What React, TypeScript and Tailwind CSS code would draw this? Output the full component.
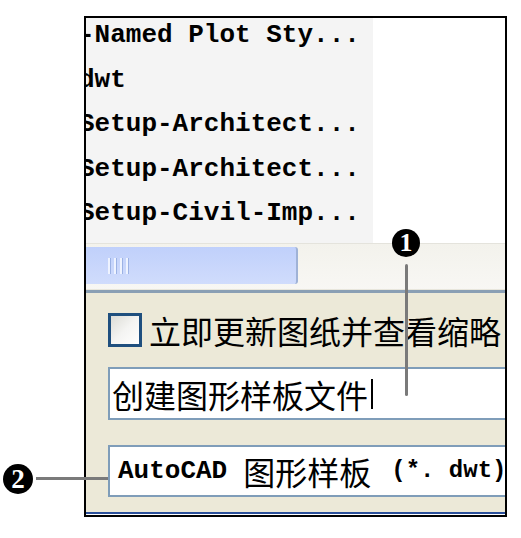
import React from "react";

const mono = { fontFamily: '"Liberation Mono", "DejaVu Sans Mono", monospace' };
const cjk = { fontFamily: '"Noto Sans CJK SC", sans-serif' };

export default function App() {
  const rows = [
    "-Named Plot Sty...",
    "dwt",
    "Setup-Architect...",
    "Setup-Architect...",
    "Setup-Civil-Imp...",
  ];
  return (
    <div className="relative w-[521px] h-[538px] bg-white overflow-hidden">
      <div className="ml-[84px] mt-[16px] w-[423px] border-t-2 border-l-2 border-r-2 border-black flex flex-col">
        {/* list */}
        <div className="h-[225px] overflow-hidden flex bg-white">
          <div className="w-[287px] bg-[#f4f4f4] overflow-hidden">
            <div className="-mt-[5px] -ml-[7px] flex flex-col">
              {rows.map((r, i) => (
                <div
                  key={i}
                  className="h-[44.5px] flex items-center text-[26px] font-bold text-black whitespace-pre leading-none"
                  style={mono}
                >
                  {r}
                </div>
              ))}
            </div>
          </div>
          <div className="flex-1 bg-white" />
        </div>
        {/* scrollbar */}
        <div className="h-[47px] bg-gradient-to-b from-[#f3f2ec] to-[#f8f7f4] border-t border-[#e4e3dc] flex flex-col">
          <div className="h-[3px]" />
          <div className="w-[212px] h-[37px] rounded-r-[3px] border-r-2 border-[#9fb2d6] bg-gradient-to-b from-[#c0d0fb] to-[#d0dcfc] flex items-center pl-[22px]">
            <div className="flex gap-[3px] h-[16px]">
              <div className="w-[3px] bg-[#eef3ff] border-r border-[#9cb2e4]" />
              <div className="w-[3px] bg-[#eef3ff] border-r border-[#9cb2e4]" />
              <div className="w-[3px] bg-[#eef3ff] border-r border-[#9cb2e4]" />
              <div className="w-[3px] bg-[#eef3ff] border-r border-[#9cb2e4]" />
            </div>
          </div>
          <div className="flex-1 border-b border-[#e8e6dc]" />
        </div>
        <div className="h-[3px] bg-[#8a9fb4]" />
        {/* panel */}
        <div className="h-[219px] bg-[#ece9d8] overflow-hidden pl-[22px] pt-[20px] flex flex-col">
          <div className="flex items-center h-[34px]">
            <div className="w-[34px] h-[34px] border-[3px] border-[#1f4f7e] bg-gradient-to-br from-[#dcdcd6] via-[#f4f4f2] to-white shrink-0" />
            <div className="ml-[7px] text-[32px] leading-none text-black whitespace-nowrap" style={cjk}>
              立即更新图纸并查看缩略
            </div>
          </div>
          <div className="mt-[20px] h-[53px] w-[440px] border-2 border-[#7f9db9] bg-white flex items-center pl-[2px] shrink-0">
            <span className="text-[32px] leading-none text-black whitespace-nowrap" style={cjk}>
              创建图形样板文件
            </span>
            <span className="w-[2px] h-[30px] bg-black ml-[3px]" />
          </div>
          <div className="mt-[25px] h-[52px] w-[440px] border-2 border-[#7f9db9] bg-white flex items-center pl-[8px] shrink-0 whitespace-nowrap">
            <span className="text-[26px] font-bold leading-none" style={mono}>
              AutoCAD
            </span>
            <span className="ml-[16px] text-[32px] leading-none" style={cjk}>
              图形样板
            </span>
            <span className="ml-[20px] text-[24px] font-bold leading-none" style={mono}>
              (*. dwt)
            </span>
          </div>
        </div>
        <div className="h-[2px] bg-[#2a4f9a]" />
        <div className="h-[1px] bg-white" />
        <div className="h-[2px] bg-black -mx-[2px]" />
      </div>

      {/* callout 1 */}
      <div className="absolute left-[405px] top-[264px] w-[3px] h-[132px] rounded-full bg-[#7a7a7a]" />
      <div
        className="absolute left-[392px] top-[229px] w-[28px] h-[28px] rounded-full bg-black text-white flex items-center justify-center text-[26px] font-bold leading-none"
        style={{ fontFamily: '"Liberation Serif", serif' }}
      >
        1
      </div>

      {/* callout 2 */}
      <div className="absolute left-[36px] top-[477px] w-[72px] h-[3px] bg-[#7a7a7a]" />
      <div
        className="absolute left-[3px] top-[464px] w-[30px] h-[30px] rounded-full bg-black text-white flex items-center justify-center text-[27px] font-bold leading-none"
        style={{ fontFamily: '"Liberation Serif", serif' }}
      >
        2
      </div>
    </div>
  );
}
